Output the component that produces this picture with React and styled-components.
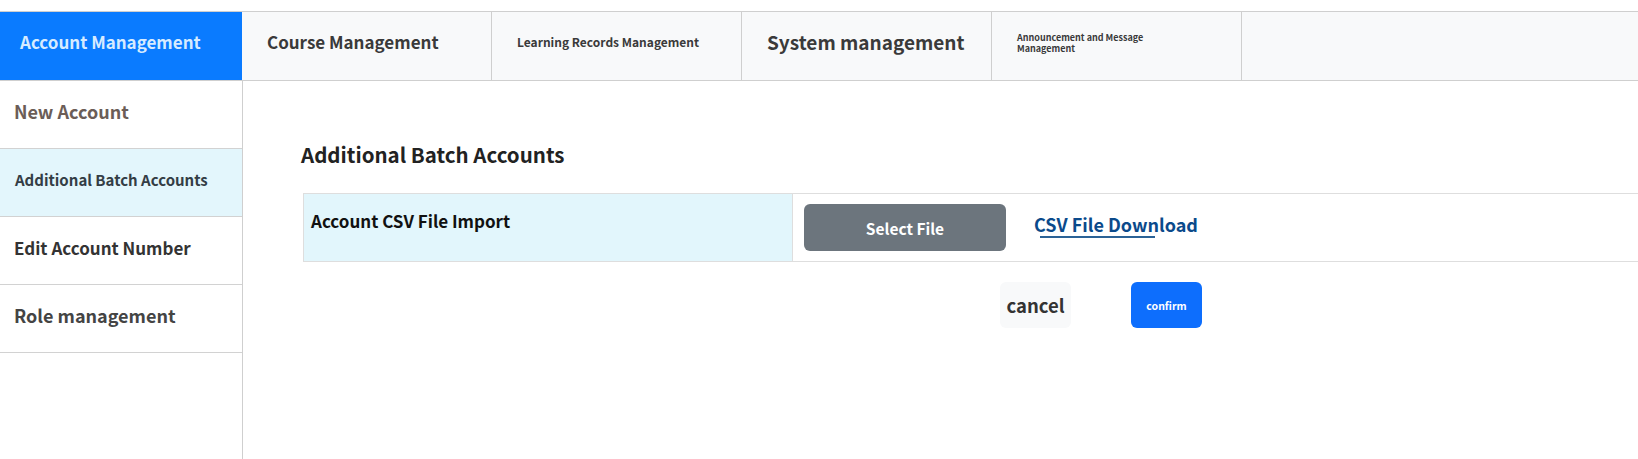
import React from "react";
import styled, { createGlobalStyle } from "styled-components";

const GlobalStyle = createGlobalStyle`
  html, body {
    margin: 0;
    padding: 0;
    background: #ffffff;
    overflow-x: hidden;
  }
  body {
    font-family: "Noto Sans CJK JP", "Noto Sans", sans-serif;
  }
`;

const tabs = [
  { label: "Account Management", size: 17, active: true },
  { label: "Course Management", size: 17 },
  { label: "Learning Records Management", size: 12 },
  { label: "System management", size: 19 },
  { label: "Announcement and Message Management", size: 9, wrap: true },
];

const sideItems = [
  { label: "New Account", size: 18, color: "#6b5d57" },
  { label: "Additional Batch Accounts", size: 15, color: "#333d45", active: true },
  { label: "Edit Account Number", size: 17, color: "#333333" },
  { label: "Role management", size: 18, color: "#444444" },
];

export default function App() {
  return (
    <>
      <GlobalStyle />
      <Page>
        <TopNav>
          {tabs.map((tab) => (
            <Tab key={tab.label} $active={tab.active} $size={tab.size}>
              <TabLabel $wrap={tab.wrap}>{tab.label}</TabLabel>
            </Tab>
          ))}
          <TabFiller />
        </TopNav>
        <Body>
          <SideMenu>
            {sideItems.map((item) => (
              <SideItem
                key={item.label}
                $active={item.active}
                $size={item.size}
                $color={item.color}
              >
                {item.label}
              </SideItem>
            ))}
          </SideMenu>
          <Main>
            <Heading>Additional Batch Accounts</Heading>
            <FormBlock>
              <FormTable>
                <LabelCell>Account CSV File Import</LabelCell>
                <ValueCell>
                  <SelectButton type="button">Select File</SelectButton>
                  <DownloadLink href="#">CSV File Download</DownloadLink>
                </ValueCell>
              </FormTable>
              <Actions>
                <ActionButton type="button" $variant="light">
                  cancel
                </ActionButton>
                <ActionButton type="button" $variant="primary">
                  confirm
                </ActionButton>
              </Actions>
            </FormBlock>
          </Main>
        </Body>
      </Page>
    </>
  );
}

const Page = styled.div`
  display: flex;
  flex-direction: column;
  min-height: 459px;
  padding-top: 11px;
  box-sizing: border-box;
`;

const TopNav = styled.nav`
  display: flex;
  height: 68px;
  border-top: 1px solid #cfcfcf;
  border-bottom: 1px solid #cfcfcf;
  background: #f8f9fa;
`;

const Tab = styled.div`
  flex: none;
  display: flex;
  align-items: center;
  box-sizing: border-box;
  width: ${(p) => (p.$active ? "242px" : "250px")};
  padding: 0 0 10px ${(p) => (p.$active ? "20px" : "25px")};
  background: ${(p) => (p.$active ? "#0a7bff" : "#f8f9fa")};
  color: ${(p) => (p.$active ? "#d6ebff" : "#3a3a3a")};
  border-right: ${(p) => (p.$active ? "none" : "1px solid #cfcfcf")};
  font-size: ${(p) => p.$size}px;
  font-weight: 700;
`;

const TabLabel = styled.span`
  display: block;
  line-height: ${(p) => (p.$wrap ? "10.5px" : "normal")};
  max-width: ${(p) => (p.$wrap ? "140px" : "none")};
  margin-top: ${(p) => (p.$wrap ? "5px" : "0")};
`;

const TabFiller = styled.div`
  flex: 1;
`;

const Body = styled.div`
  flex: 1;
  display: flex;
`;

const SideMenu = styled.aside`
  flex: none;
  width: 242px;
  border-right: 1px solid #cfcfcf;
  display: flex;
  flex-direction: column;
`;

const SideItem = styled.div`
  height: 68px;
  box-sizing: border-box;
  display: flex;
  align-items: center;
  padding: 0 0 7px ${(p) => (p.$active ? "15px" : "14px")};
  border-bottom: 1px solid #d2d2d2;
  background: ${(p) => (p.$active ? "#e3f6fc" : "#ffffff")};
  color: ${(p) => p.$color};
  font-size: ${(p) => p.$size}px;
  font-weight: 700;
`;

const Main = styled.main`
  flex: 1;
  min-width: 0;
  padding: 55px 0 0 58px;
`;

const Heading = styled.h2`
  margin: 0 0 21px;
  font-size: 20.5px;
  font-weight: 700;
  color: #222222;
  line-height: 36px;
`;

const FormBlock = styled.div`
  width: 1596px;
  margin-left: 2px;
  display: flex;
  flex-direction: column;
`;

const FormTable = styled.div`
  display: flex;
  border: 1px solid #dedede;
`;

const LabelCell = styled.div`
  flex: none;
  width: 489px;
  box-sizing: border-box;
  height: 67px;
  padding: 14px 0 0 7px;
  background: #e2f6fc;
  border-right: 1px solid #dedede;
  font-size: 17px;
  font-weight: 700;
  color: #111111;
`;

const ValueCell = styled.div`
  flex: 1;
  display: flex;
  align-items: center;
  padding-left: 11px;
  gap: 28px;
`;

const SelectButton = styled.button`
  width: 202px;
  height: 47px;
  border: none;
  border-radius: 6px;
  background: #6c757d;
  color: #ffffff;
  font-family: inherit;
  font-size: 15.5px;
  font-weight: 700;
`;

const DownloadLink = styled.a`
  position: relative;
  color: #0b4a8b;
  font-size: 18px;
  font-weight: 700;
  text-decoration: none;
  margin-top: -7px;

  &::after {
    content: "";
    position: absolute;
    left: 6px;
    width: 115px;
    bottom: -1px;
    height: 2px;
    background: #2b6296;
  }
`;

const Actions = styled.div`
  display: flex;
  justify-content: center;
  gap: 60px;
  margin-top: 20px;
`;

const ActionButton = styled.button`
  width: 71px;
  height: 46px;
  border: none;
  border-radius: 6px;
  font-family: inherit;
  font-weight: 700;
  background: ${(p) => (p.$variant === "primary" ? "#0d6efd" : "#f8f9fa")};
  color: ${(p) => (p.$variant === "primary" ? "#ffffff" : "#333333")};
  font-size: ${(p) => (p.$variant === "primary" ? "10.5px" : "18.5px")};
`;
